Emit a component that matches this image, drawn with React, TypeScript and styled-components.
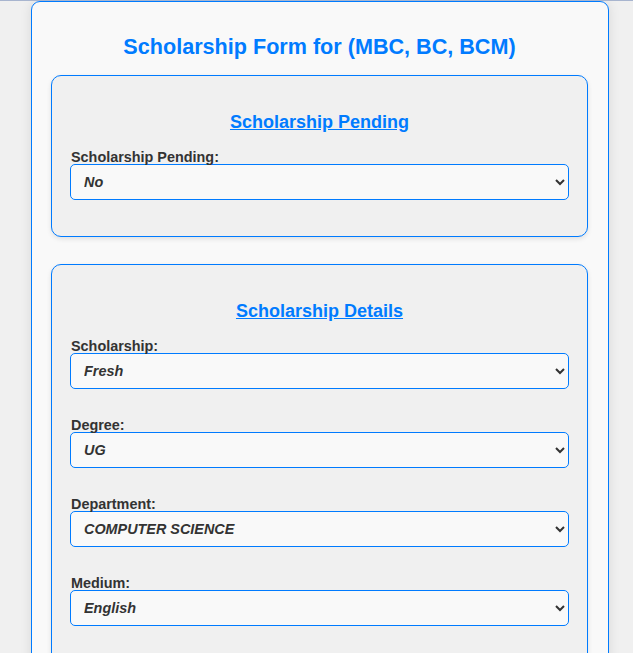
import React from 'react';
import styled, { createGlobalStyle } from 'styled-components';

const GlobalStyle = createGlobalStyle`
  html, body {
    margin: 0;
    padding: 0;
    background: #f0f0f0;
    font-family: 'Liberation Sans', Arial, sans-serif;
    font-size: 18px;
  }
  body {
    border-top: 1px solid #a8b5cf;
    overflow: hidden;
  }
`;

const Card = styled.div`
  box-sizing: border-box;
  width: 578px;
  margin-left: 31px;
  background: #f9f9f9;
  border: 1px solid #007bff;
  border-radius: 9px;
  box-shadow: 0 0 12px rgba(0, 0, 0, 0.1);
  padding: 20px 20px 40px 19px;
`;

const Title = styled.h2`
  margin: 12px 0 16px;
  text-align: center;
  color: #007bff;
  font-size: 21.6px;
  font-weight: bold;
  line-height: 25px;
`;

const Section = styled.section`
  box-sizing: border-box;
  background: #f0f0f0;
  border: 1px solid #007bff;
  border-radius: 10px;
  box-shadow: 0 2px 5px rgba(0, 0, 0, 0.1);
  padding: 20px 18px 9px;
  margin-bottom: 27px;
`;

const SectionTitle = styled.h3`
  margin: 16px 0 15px;
  text-align: center;
  color: #007bff;
  font-size: 18px;
  font-weight: bold;
  line-height: 21px;
  text-decoration: underline;
`;

const Group = styled.div`
  margin-bottom: 27px;
`;

const Label = styled.label`
  display: block;
  padding-left: 1px;
  color: #333;
  font-size: 14.4px;
  font-weight: bold;
  line-height: 16px;
  padding-top: 1px;
  margin-bottom: -1px;
`;

const Select = styled.select`
  box-sizing: border-box;
  display: block;
  width: 100%;
  height: 36px;
  padding: 0 8px 0 9px;
  background: #f9f9f9;
  border: 1px solid #007bff;
  border-radius: 5px;
  color: #333;
  font-family: 'Liberation Sans', Arial, sans-serif;
  font-size: 14.4px;
  font-weight: bold;
  font-style: italic;
  outline: none;
`;

interface FieldProps {
  label: string;
  value: string;
  options: string[];
}

const Field: React.FC<FieldProps> = ({ label, value, options }) => (
  <Group>
    <Label>{label}</Label>
    <Select defaultValue={value}>
      {options.map((o) => (
        <option key={o} value={o}>
          {o}
        </option>
      ))}
    </Select>
  </Group>
);

export default function App() {
  return (
    <>
      <GlobalStyle />
      <Card>
        <Title>Scholarship Form for (MBC, BC, BCM)</Title>
        <Section>
          <SectionTitle>Scholarship Pending</SectionTitle>
          <Field label="Scholarship Pending:" value="No" options={['No', 'Yes']} />
        </Section>
        <Section>
          <SectionTitle>Scholarship Details</SectionTitle>
          <Field label="Scholarship:" value="Fresh" options={['Fresh', 'Renewal']} />
          <Field label="Degree:" value="UG" options={['UG', 'PG']} />
          <Field
            label="Department:"
            value="COMPUTER SCIENCE"
            options={['COMPUTER SCIENCE', 'MATHEMATICS', 'PHYSICS', 'COMMERCE']}
          />
          <Field label="Medium:" value="English" options={['English', 'Tamil']} />
        </Section>
      </Card>
    </>
  );
}
